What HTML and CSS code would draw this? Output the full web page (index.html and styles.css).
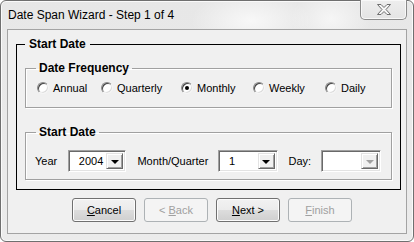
FILE: index.html
```html
<!DOCTYPE html>
<html lang="en">
<head>
  <meta charset="UTF-8">
  <title>Date Span Wizard</title>
  <link rel="stylesheet" href="styles.css">
</head>
<body>
  <div class="window">
    <div class="titlebar">
      <span class="title">Date Span Wizard - Step 1 of 4</span>
      <button type="button" class="close-btn">
        <svg width="14" height="11" viewBox="0 0 14 11">
          <polygon points="0.5,0.5 4,0.5 7,3.5 10,0.5 13.5,0.5 9,5.5 13.5,10.5 10,10.5 7,7.5 4,10.5 0.5,10.5 5,5.5" fill="#f7f7f7" stroke="#6d6d6d" stroke-width="1" stroke-linejoin="round"/>
        </svg>
      </button>
    </div>

    <div class="client">
      <fieldset class="group outer-group">
        <legend>Start Date</legend>

        <fieldset class="group inner-group freq-group">
          <legend>Date Frequency</legend>
          <div class="radio-row">
            <label class="radio w-annual"><span class="radio-mark"></span>Annual</label>
            <label class="radio w-quarterly"><span class="radio-mark"></span>Quarterly</label>
            <label class="radio w-monthly"><span class="radio-mark checked"></span>Monthly</label>
            <label class="radio w-weekly"><span class="radio-mark"></span>Weekly</label>
            <label class="radio"><span class="radio-mark"></span>Daily</label>
          </div>
        </fieldset>

        <fieldset class="group inner-group date-group">
          <legend>Start Date</legend>
          <div class="field-row">
            <span class="lbl lbl-year">Year</span>
            <div class="combo combo-year">
              <span class="combo-value">2004</span>
              <span class="combo-btn"><span class="arrow"></span></span>
            </div>
            <span class="lbl lbl-month">Month/Quarter</span>
            <div class="combo combo-month">
              <span class="combo-value">1</span>
              <span class="combo-btn"><span class="arrow"></span></span>
            </div>
            <span class="lbl lbl-day">Day:</span>
            <div class="combo combo-day disabled">
              <span class="combo-value"></span>
              <span class="combo-btn"><span class="arrow"></span></span>
            </div>
          </div>
        </fieldset>
      </fieldset>

      <div class="form-actions">
        <button type="button" class="btn"><u>C</u>ancel</button>
        <button type="button" class="btn" disabled>&lt; <u>B</u>ack</button>
        <button type="button" class="btn"><u>N</u>ext &gt;</button>
        <button type="button" class="btn" disabled><u>F</u>inish</button>
      </div>
    </div>
  </div>
</body>
</html>
```

FILE: styles.css
```css
* {
  box-sizing: border-box;
}
body {
  margin: 0;
  font-family: "Liberation Sans", Arial, sans-serif;
  font-size: 11px;
  color: #000;
  background: #fff;
}
.window {
  width: 414px;
  height: 242px;
  display: flex;
  flex-direction: column;
  border: 1px solid #6f6f6f;
  border-radius: 6px;
  background:
    radial-gradient(ellipse 60px 30px at 250px 20px, rgba(255, 255, 255, 0.7), rgba(255, 255, 255, 0)),
    radial-gradient(ellipse 40px 30px at 330px 18px, rgba(255, 255, 255, 0.6), rgba(255, 255, 255, 0)),
    linear-gradient(to bottom, #e7e7e7, #ebebeb);
  box-shadow: inset 0 0 0 1px #fafafa;
}

/* title bar */
.titlebar {
  height: 28px;
  flex: none;
  display: flex;
  justify-content: space-between;
  align-items: flex-start;
  padding-left: 7px;
}
.title {
  font-size: 12px;
  line-height: 28px;
  color: #000;
}
.close-btn {
  width: 47px;
  height: 20px;
  margin-top: -1px;
  margin-right: 6px;
  padding: 0;
  border: 1px solid #8b8b8b;
  border-top: none;
  border-radius: 0 0 5px 5px;
  background: linear-gradient(to bottom, #eeeeee, #e4e4e4);
  box-shadow: inset 0 0 0 1px #f8f8f8;
  display: flex;
  justify-content: center;
  align-items: center;
}
.close-btn svg {
  display: block;
  margin-top: -1px;
}

/* client area */
.client {
  height: 205px;
  margin: 0 6px;
  border: 1px solid #a3a3a3;
  background-color: #f0f0f0;
  padding-top: 7px;
}
.group {
  margin: 0;
  min-width: 0;
}
.group legend {
  font-size: 12px;
  font-weight: bold;
  line-height: 14px;
  height: 14px;
  padding: 0 4px;
}
.outer-group {
  margin: 0 5px 0 8px;
  border: 1px solid #000;
  padding: 10px 8px 9px 8px;
}
.inner-group {
  border: 1px solid #a0a0a0;
  box-shadow: 1px 1px 0 #fff, inset 1px 1px 0 #fff;
  padding: 0 10px;
}
.inner-group legend {
  padding: 0 3px;
}
.freq-group {
  padding-top: 6px;
  padding-bottom: 12px;
}
.date-group {
  margin-top: 17px;
  padding-top: 11px;
  padding-bottom: 7px;
}

/* radio buttons */
.radio-row {
  display: flex;
  height: 14px;
  align-items: center;
  padding-left: 1px;
}
.radio {
  display: flex;
  align-items: center;
  line-height: 14px;
}
.w-annual { width: 64px; }
.w-quarterly { width: 80px; }
.w-monthly { width: 72px; }
.w-weekly { width: 72px; }
.radio-mark {
  width: 12px;
  height: 12px;
  margin-right: 4px;
  border-radius: 50%;
  border: 1px solid;
  border-color: #8a8a8a #f4f4f4 #f4f4f4 #8a8a8a;
  background: #fff;
  box-shadow: inset 1px 1px 0 #444, inset -1px -1px 0 #dcdcdc;
  display: flex;
  justify-content: center;
  align-items: center;
}
.radio-mark.checked::after {
  content: "";
  width: 4px;
  height: 4px;
  border-radius: 50%;
  background: #000;
}

/* date fields */
.field-row {
  display: flex;
  align-items: center;
  height: 22px;
}
.lbl-year { width: 33px; margin-left: -1px; }
.lbl-month { width: 81px; }
.lbl-day { width: 33px; }
.combo {
  height: 22px;
  display: flex;
  align-items: stretch;
  background: #fff;
  border: 1px solid;
  border-color: #a0a0a0 #fff #fff #a0a0a0;
  box-shadow: inset 1px 1px 0 #696969, inset -1px -1px 0 #e3e3e3;
  padding: 2px;
}
.combo-year { width: 59px; margin-right: 11px; }
.combo-month { width: 60px; margin-right: 11px; }
.combo-day { width: 60px; }
.combo-value {
  flex: 1;
  padding-left: 8px;
  line-height: 16px;
}
.combo-btn {
  width: 17px;
  background: #f0f0f0;
  border: 1px solid;
  border-color: #e3e3e3 #696969 #696969 #e3e3e3;
  box-shadow: inset 1px 1px 0 #fff, inset -1px -1px 0 #a0a0a0;
  display: flex;
  justify-content: center;
  align-items: center;
}
.arrow {
  width: 0;
  height: 0;
  border-left: 4px solid transparent;
  border-right: 4px solid transparent;
  border-top: 4px solid #000;
  margin-top: 1px;
}
.disabled .arrow {
  border-top-color: #a0a0a0;
}

/* buttons */
.form-actions {
  display: flex;
  gap: 8px;
  margin-top: 8px;
  padding-left: 64px;
}
.btn {
  width: 64px;
  height: 24px;
  padding: 0;
  font-family: "Liberation Sans", Arial, sans-serif;
  font-size: 11px;
  color: #000;
  border: 1px solid #707070;
  border-radius: 3px;
  background: linear-gradient(to bottom, #f2f2f2 0%, #ebebeb 50%, #dddddd 51%, #cfcfcf 100%);
  box-shadow: inset 0 0 0 1px #fcfcfc;
}
.btn:disabled {
  color: #a0a0a0;
  border-color: #adb2b5;
  background: #f4f4f4;
  box-shadow: none;
}
```
